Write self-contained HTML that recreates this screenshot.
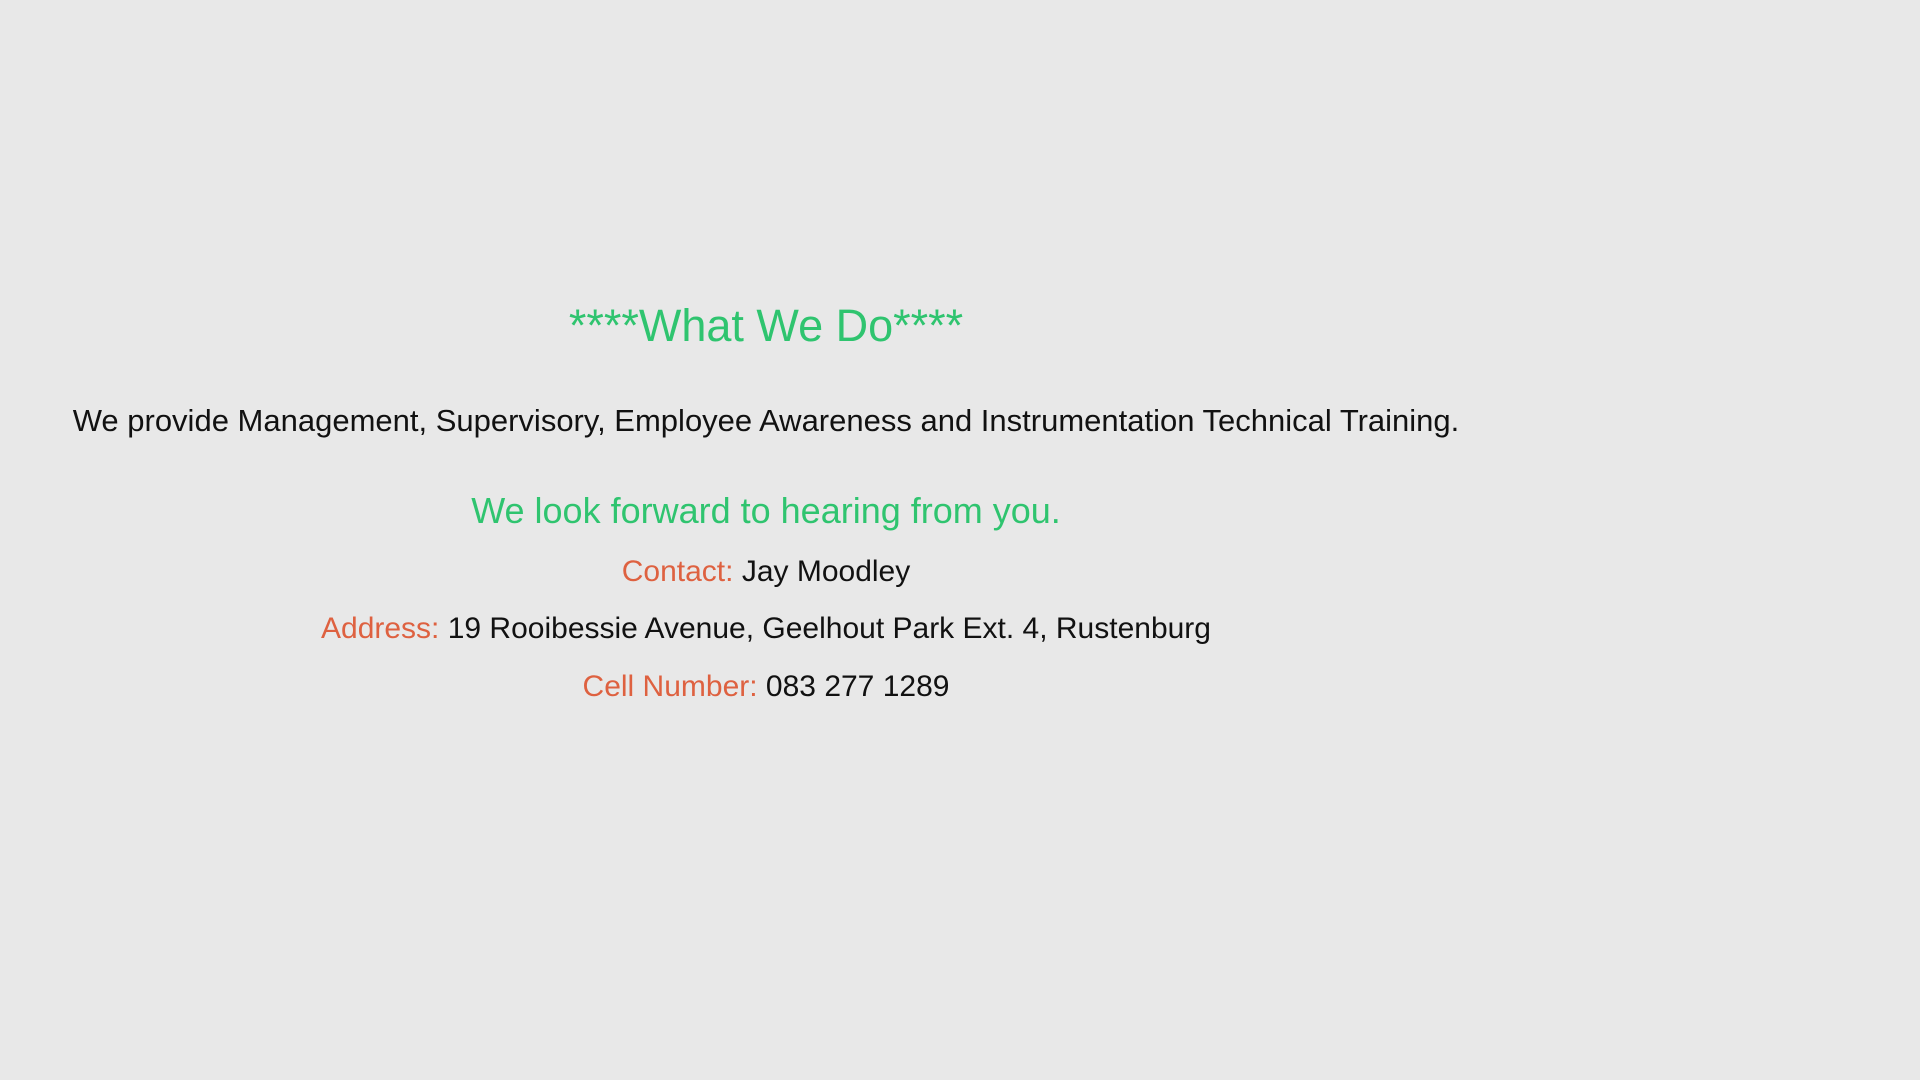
<!DOCTYPE html>
<html><head><meta charset="utf-8"><style>
html,body{margin:0;padding:0;width:1920px;height:1080px;background:#e8e8e8;overflow:hidden;font-family:"Liberation Sans",sans-serif;}
.l{position:absolute;left:0;width:1532px;text-align:center;white-space:nowrap;color:#111;}
.g{color:#2fc46f;}
.o{color:#de6140;}
</style></head><body>
<div class="l g" style="top:296px;line-height:60px;font-size:45px;">****What We Do****</div>
<div class="l" style="top:401px;line-height:40px;font-size:31px;">We provide Management, Supervisory, Employee Awareness and Instrumentation Technical Training.</div>
<div class="l g" style="top:490px;line-height:42px;font-size:36px;">We look forward to hearing from you.</div>
<div class="l" style="top:553px;line-height:38px;font-size:30px;"><span class="o">Contact:</span> Jay Moodley</div>
<div class="l" style="top:610px;line-height:38px;font-size:30px;"><span class="o">Address:</span> 19 Rooibessie Avenue, Geelhout Park Ext. 4, Rustenburg</div>
<div class="l" style="top:668px;line-height:38px;font-size:30px;"><span class="o">Cell Number:</span> 083 277 1289</div>
</body></html>
